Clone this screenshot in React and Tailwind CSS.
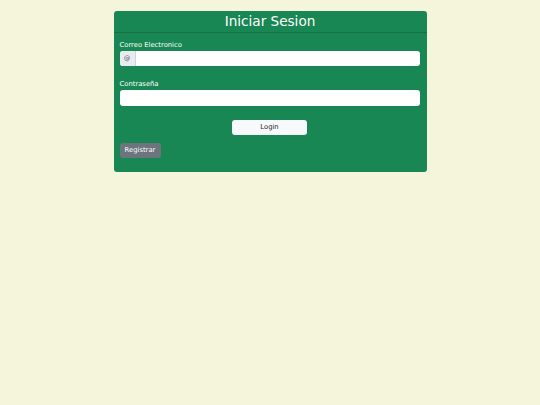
import React from 'react'

const App = () => {
    return (
        <div className="min-h-screen w-full bg-[#f5f5dc] pt-[11px] font-['DejaVu_Sans',sans-serif]">
            {/* Login card */}
            <div className="w-[313px] h-[161px] mx-auto bg-[#198754] rounded-[3px]">
                <div className="h-[22px] border-b border-[#157046] flex items-center justify-center">
                    <h1 className="text-[13.6px] leading-none text-white">Iniciar Sesion</h1>
                </div>
                <div className="pl-[6px] pr-[7px] pt-[7px]">
                    <label className="block text-[6.8px] leading-[10px] text-white mb-[1px]">Correo Electronico</label>
                    <div className="flex h-[15px] rounded-[3px] bg-white overflow-hidden">
                        <span className="w-[16px] flex items-center justify-center bg-[#e9ecef] border-r border-[#ced4da] text-[6.5px] text-[#495057]">@</span>
                        <input className="flex-1 outline-none text-[8px] px-1" />
                    </div>

                    <label className="block text-[6.8px] leading-[10px] text-white mt-[13px] mb-[1px]">Contraseña</label>
                    <input type="password" className="block w-full h-[16px] rounded-[3px] bg-white outline-none text-[8px] px-1" />

                    <div className="flex justify-center mt-[14px]">
                        <button className="w-[75px] h-[15px] rounded-[3px] bg-[#f8f9fa] text-[6.8px] text-[#212529]">Login</button>
                    </div>
                    <button className="mt-[8px] w-[41px] h-[15px] rounded-[3px] bg-[#6c757d] text-[6.8px] text-white">Registrar</button>
                </div>
            </div>
        </div>
    )
}

export default App
